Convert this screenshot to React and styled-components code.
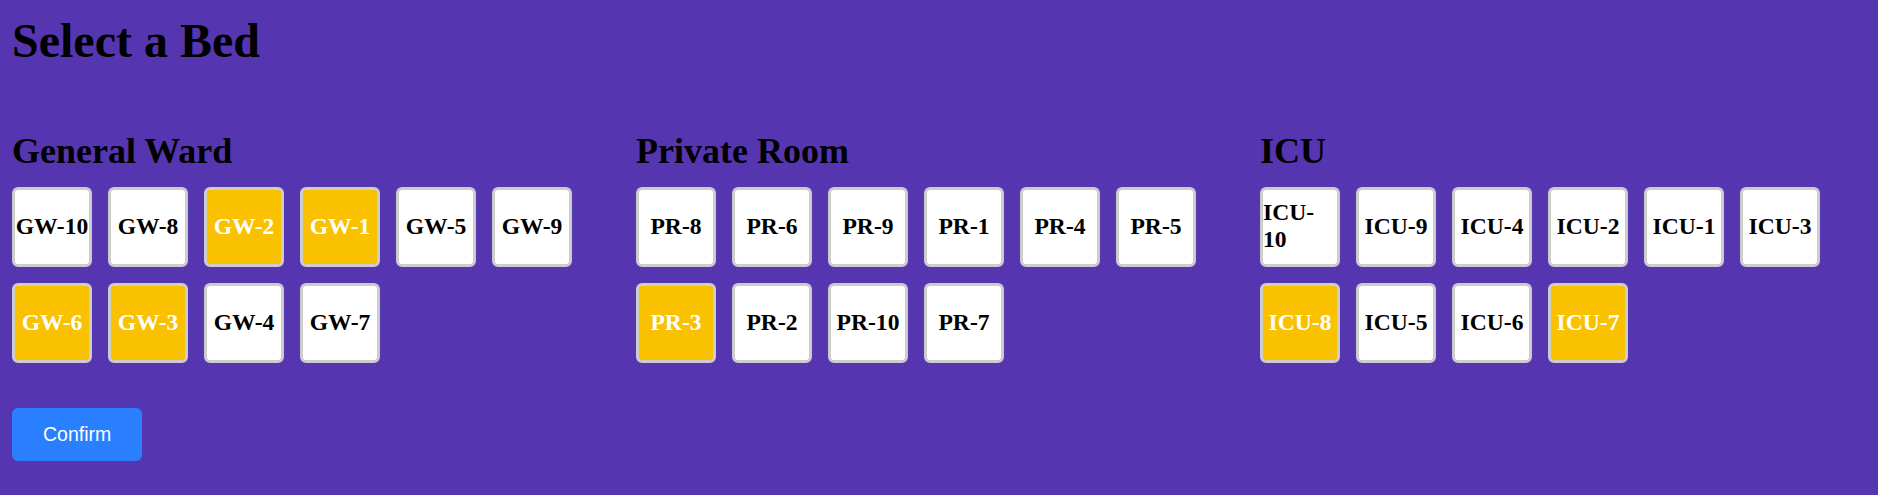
import React, { useState } from 'react';
import styled, { createGlobalStyle } from 'styled-components';

const GlobalStyle = createGlobalStyle`
    html, body {
        margin: 0;
        padding: 0;
        background: #5536b0;
    }
`;

const wards = [
    {
        name: 'General Ward',
        beds: [
            { id: 'GW-10' }, { id: 'GW-8' }, { id: 'GW-2', taken: true }, { id: 'GW-1', taken: true },
            { id: 'GW-5' }, { id: 'GW-9' }, { id: 'GW-6', taken: true }, { id: 'GW-3', taken: true },
            { id: 'GW-4' }, { id: 'GW-7' },
        ],
    },
    {
        name: 'Private Room',
        beds: [
            { id: 'PR-8' }, { id: 'PR-6' }, { id: 'PR-9' }, { id: 'PR-1' }, { id: 'PR-4' },
            { id: 'PR-5' }, { id: 'PR-3', taken: true }, { id: 'PR-2' }, { id: 'PR-10' }, { id: 'PR-7' },
        ],
    },
    {
        name: 'ICU',
        beds: [
            { id: 'ICU-10' }, { id: 'ICU-9' }, { id: 'ICU-4' }, { id: 'ICU-2' }, { id: 'ICU-1' },
            { id: 'ICU-3' }, { id: 'ICU-8', taken: true }, { id: 'ICU-5' }, { id: 'ICU-6' },
            { id: 'ICU-7', taken: true },
        ],
    },
];

export default function App() {
    const [selected, setSelected] = useState(null);

    return (
        <Page>
            <GlobalStyle />
            <Title>Select a Bed</Title>
            <Wards>
                {wards.map((ward) => (
                    <Ward key={ward.name}>
                        <WardName>{ward.name}</WardName>
                        <BedGrid>
                            {ward.beds.map((bed) => (
                                <Bed
                                    key={bed.id}
                                    $taken={bed.taken}
                                    $active={selected === bed.id}
                                    onClick={() => !bed.taken && setSelected(bed.id)}
                                >
                                    {bed.id}
                                </Bed>
                            ))}
                        </BedGrid>
                    </Ward>
                ))}
            </Wards>
            <Confirm>Confirm</Confirm>
        </Page>
    );
}

const Page = styled.div`
    padding: 13px 12px 30px;
    font-family: "Liberation Serif", "Times New Roman", serif;
    color: #000;
`;

const Title = styled.h1`
    margin: 0 0 62px;
    font-size: 48px;
    font-weight: bold;
    line-height: normal;
`;

const Wards = styled.div`
    display: flex;
    gap: 24px;
`;

const Ward = styled.section`
    width: 600px;
`;

const WardName = styled.h2`
    margin: 0 0 15px;
    font-size: 36px;
    font-weight: bold;
    line-height: normal;
`;

const BedGrid = styled.div`
    display: flex;
    flex-wrap: wrap;
    gap: 16px;
`;

const Bed = styled.div`
    box-sizing: border-box;
    width: 80px;
    height: 80px;
    padding-bottom: 2px;
    display: flex;
    align-items: center;
    justify-content: center;
    border: 3px solid #cccccc;
    border-radius: 6px;
    background: ${(p) => (p.$taken ? '#f9c100' : p.$active ? '#d9f0d9' : '#ffffff')};
    color: ${(p) => (p.$taken ? '#ffffff' : '#000000')};
    font-size: 23.6px;
    font-weight: bold;
    line-height: normal;
    cursor: ${(p) => (p.$taken ? 'not-allowed' : 'pointer')};
`;

const Confirm = styled.button`
    margin-top: 45px;
    padding: 15px 31px;
    border: none;
    border-radius: 6px;
    background: #2a7fff;
    color: #ffffff;
    font-family: "Liberation Sans", Arial, sans-serif;
    font-size: 19.5px;
    line-height: 23px;
    cursor: pointer;
`;
